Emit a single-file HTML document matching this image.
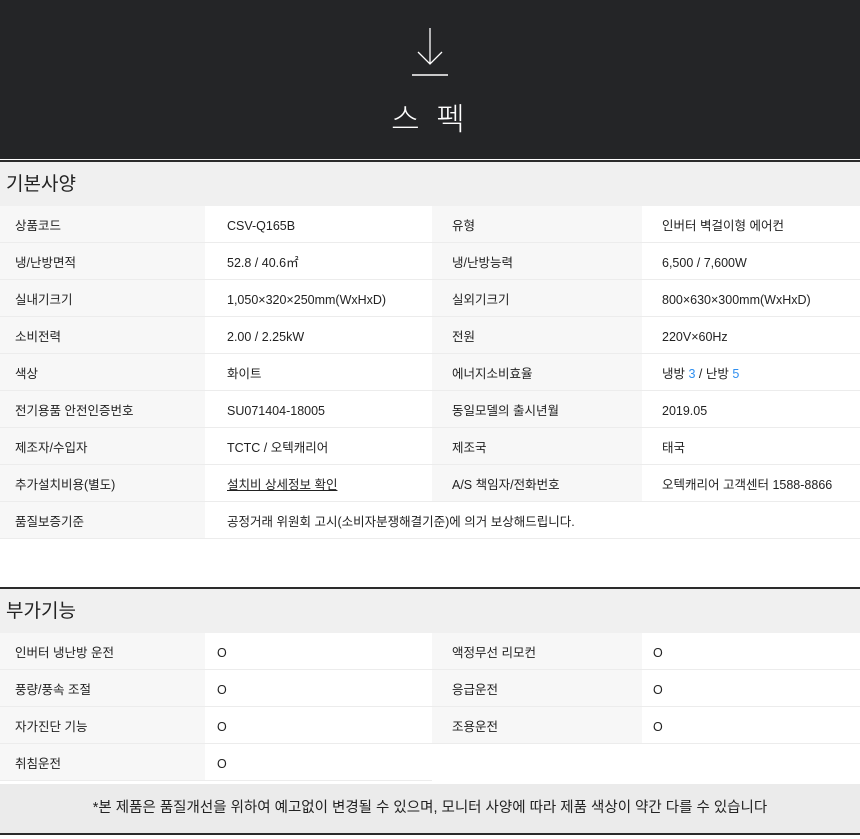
<!DOCTYPE html>
<html><head><meta charset="utf-8"><style>
*{margin:0;padding:0;box-sizing:border-box}
body{width:860px;height:839px;background:#fff;font-family:"Liberation Sans","Noto Sans CJK KR",sans-serif;color:#222;font-size:12.5px;position:relative;overflow:hidden}
.top{position:absolute;left:0;top:0;width:860px;height:159px;background:#242527}
.top .t{position:absolute;left:0;width:860px;top:94px;text-align:center;color:#fff;font-size:31px;letter-spacing:4px;font-weight:300}
.l1{position:absolute;left:0;top:159px;width:860px;height:2px;background:#fff}
.l2{position:absolute;left:0;top:160px;width:860px;height:2px;background:#2b2b2b}
.sec{position:absolute;left:0;width:860px;height:44px;background:#f0f0f0;font-size:19px;padding-left:6px;line-height:46px;color:#222}
.row{position:absolute;left:0;width:860px;height:37px;border-bottom:1px solid #ececec}
.row div{position:absolute;top:0;height:36px;line-height:40px;white-space:nowrap}
.a{left:0;width:205px;background:#f7f7f7;padding-left:15px}
.b{left:205px;width:227px;background:#fff;padding-left:22px}
.c{left:432px;width:210px;background:#f7f7f7;padding-left:20px}
.d{left:642px;width:218px;background:#fff;padding-left:20px}
.r2 .b{padding-left:12px}.r2 .d{padding-left:11px}
.blue{color:#2f8ff0}
.foot{position:absolute;left:0;top:784px;width:860px;height:49px;background:#ebebeb;text-align:center;line-height:48px;font-size:14.5px}
.fl{position:absolute;left:0;top:833px;width:860px;height:2px;background:#2b2b2b}
</style></head><body>
<div class="top">
<svg style="position:absolute;left:408px;top:26px" width="44" height="52" viewBox="0 0 44 52"><path d="M22 2V38M10 26L22 38L34 26" stroke="#fff" stroke-width="1.3" fill="none"/><path d="M4 49H40" stroke="#fff" stroke-width="1.5"/></svg>
<div class="t">스 펙</div>
</div>
<div class="l1"></div><div class="l2"></div>
<div class="sec" style="top:162px">기본사양</div>
<div class="row" style="top:206px"><div class="a">상품코드</div><div class="b">CSV-Q165B</div><div class="c">유형</div><div class="d">인버터 벽걸이형 에어컨</div></div>
<div class="row" style="top:243px"><div class="a">냉/난방면적</div><div class="b">52.8 / 40.6㎡</div><div class="c">냉/난방능력</div><div class="d">6,500 / 7,600W</div></div>
<div class="row" style="top:280px"><div class="a">실내기크기</div><div class="b">1,050×320×250mm(WxHxD)</div><div class="c">실외기크기</div><div class="d">800×630×300mm(WxHxD)</div></div>
<div class="row" style="top:317px"><div class="a">소비전력</div><div class="b">2.00 / 2.25kW</div><div class="c">전원</div><div class="d">220V×60Hz</div></div>
<div class="row" style="top:354px"><div class="a">색상</div><div class="b">화이트</div><div class="c">에너지소비효율</div><div class="d">냉방 <span class="blue">3</span> / 난방 <span class="blue">5</span></div></div>
<div class="row" style="top:391px"><div class="a">전기용품 안전인증번호</div><div class="b">SU071404-18005</div><div class="c">동일모델의 출시년월</div><div class="d">2019.05</div></div>
<div class="row" style="top:428px"><div class="a">제조자/수입자</div><div class="b">TCTC / 오텍캐리어</div><div class="c">제조국</div><div class="d">태국</div></div>
<div class="row" style="top:465px"><div class="a">추가설치비용(별도)</div><div class="b"><u>설치비 상세정보 확인</u></div><div class="c">A/S 책임자/전화번호</div><div class="d">오텍캐리어 고객센터 1588-8866</div></div>
<div class="row" style="top:502px"><div class="a">품질보증기준</div><div class="b" style="width:655px">공정거래 위원회 고시(소비자분쟁해결기준)에 의거 보상해드립니다.</div></div>
<div class="l2" style="top:587px"></div>
<div class="sec" style="top:589px">부가기능</div>
<div class="row r2" style="top:633px"><div class="a">인버터 냉난방 운전</div><div class="b">O</div><div class="c">액정무선 리모컨</div><div class="d">O</div></div>
<div class="row r2" style="top:670px"><div class="a">풍량/풍속 조절</div><div class="b">O</div><div class="c">응급운전</div><div class="d">O</div></div>
<div class="row r2" style="top:707px"><div class="a">자가진단 기능</div><div class="b">O</div><div class="c">조용운전</div><div class="d">O</div></div>
<div class="row r2" style="top:744px;width:432px"><div class="a">취침운전</div><div class="b">O</div></div>
<div class="foot">*본 제품은 품질개선을 위하여 예고없이 변경될 수 있으며, 모니터 사양에 따라 제품 색상이 약간 다를 수 있습니다</div>
<div class="fl"></div>
</body></html>
